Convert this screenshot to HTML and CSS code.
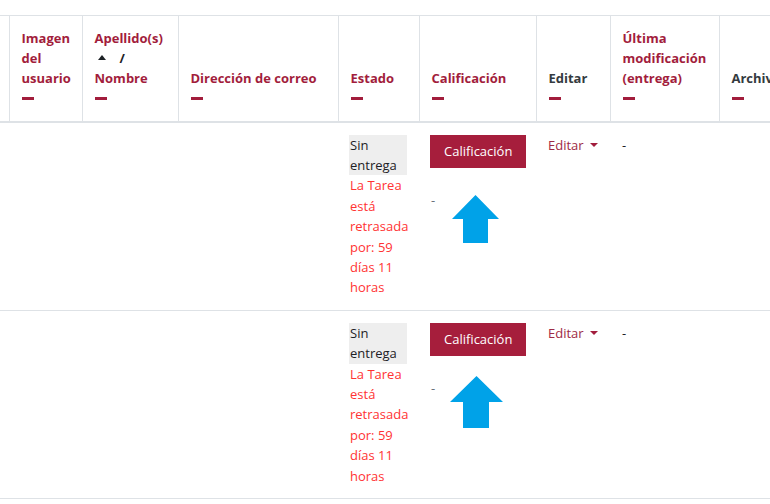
FILE: index.html
```html
<!DOCTYPE html>
<html lang="es">
<head>
    <meta charset="UTF-8">
    <meta name="viewport" content="width=device-width, initial-scale=1.0">
    <title>Calificaciones</title>
    <link rel="stylesheet" href="styles.css">
</head>
<body>

    <div class="table-wrap">
        <table class="grading">
            <colgroup>
                <col class="col-edge">
                <col class="col-picture">
                <col class="col-name">
                <col class="col-email">
                <col class="col-status">
                <col class="col-grade">
                <col class="col-edit">
                <col class="col-modified">
                <col class="col-files">
            </colgroup>
            <thead>
                <tr>
                    <th class="edge"></th>
                    <th><a href="#">Imagen del usuario</a><span class="hide-icon"></span></th>
                    <th>
                        <a href="#">Apellido(s)</a>
                        <div class="sort-line">
                            <svg class="sort-asc" width="8" height="5" viewBox="0 0 8 5"><polygon points="4,0 8,5 0,5" fill="#1d2125"/></svg>
                            <span class="sep">/</span>
                        </div>
                        <a href="#">Nombre</a><span class="hide-icon"></span>
                    </th>
                    <th><a href="#">Dirección de correo</a><span class="hide-icon"></span></th>
                    <th><a href="#">Estado</a><span class="hide-icon"></span></th>
                    <th><a href="#">Calificación</a><span class="hide-icon"></span></th>
                    <th class="plain">Editar<span class="hide-icon"></span></th>
                    <th><a href="#">Última modificación (entrega)</a><span class="hide-icon"></span></th>
                    <th class="plain"><span class="nowrap">Archivos enviados</span><span class="hide-icon"></span></th>
                </tr>
            </thead>
            <tbody>
                <tr>
                    <td class="edge"></td>
                    <td></td>
                    <td></td>
                    <td></td>
                    <td>
                        <div class="status-none">Sin entrega</div>
                        <div class="overdue">La Tarea está retrasada por: 59 días 11 horas</div>
                    </td>
                    <td class="grade-cell">
                        <button class="btn-grade">Calificación</button>
                        <div class="muted">-</div>
                        <svg class="pointer pointer-one" width="47" height="48" viewBox="0 0 47 48"><polygon points="23.5,0 47,24 36,24 36,48 11,48 11,24 0,24" fill="#00a2e8"/></svg>
                    </td>
                    <td><a class="menu-link" href="#">Editar <span class="caret"></span></a></td>
                    <td>-</td>
                    <td></td>
                </tr>
                <tr>
                    <td class="edge"></td>
                    <td></td>
                    <td></td>
                    <td></td>
                    <td>
                        <div class="status-none">Sin entrega</div>
                        <div class="overdue">La Tarea está retrasada por: 59 días 11 horas</div>
                    </td>
                    <td class="grade-cell">
                        <button class="btn-grade">Calificación</button>
                        <div class="muted">-</div>
                        <svg class="pointer pointer-two" width="53" height="52" viewBox="0 0 53 52"><polygon points="26.5,0 53,26 39,26 39,52 13,52 13,26 0,26" fill="#00a2e8"/></svg>
                    </td>
                    <td><a class="menu-link" href="#">Editar <span class="caret"></span></a></td>
                    <td>-</td>
                    <td></td>
                </tr>
            </tbody>
        </table>
    </div>

</body>
</html>
```

FILE: styles.css
```css
html, body {
    overflow: hidden;
}
body {
    font-family: "Open Sans", "Noto Sans", sans-serif;
    font-size: 13px;
    line-height: 20.4px;
    margin: 0;
    padding: 0;
    background-color: #ffffff;
    color: #1d2125;
}
.table-wrap {
    padding-top: 15px;
}
.grading {
    border-collapse: collapse;
    table-layout: fixed;
    width: 869px;
    border-top: 1px solid #dee2e6;
}
.col-edge { width: 9px; }
.col-picture { width: 73px; }
.col-name { width: 96px; }
.col-email { width: 160px; }
.col-status { width: 81px; }
.col-grade { width: 117px; }
.col-edit { width: 74px; }
.col-modified { width: 109px; }
.col-files { width: 150px; }

.grading th,
.grading td {
    padding: 12px;
    text-align: left;
}
.grading th.edge,
.grading td.edge {
    padding: 0;
}
.grading th {
    vertical-align: bottom;
    font-weight: bold;
    line-height: 20.2px;
    border-right: 1px solid #dee2e6;
    border-bottom: 2px solid #dee2e6;
    color: #343a40;
}
.grading th a {
    color: #a21d3c;
    text-decoration: none;
}
.grading td {
    vertical-align: top;
    border-bottom: 1px solid #dee2e6;
}
.hide-icon {
    display: flex;
    align-items: center;
    height: 20px;
}
.hide-icon::before {
    content: "";
    display: block;
    width: 12px;
    height: 3px;
    background-color: #a21d3c;
}
.sort-line {
    display: flex;
    align-items: center;
    height: 20px;
}
.sort-asc {
    margin-left: 3px;
    margin-top: -2px;
}
.sep {
    margin-left: 14px;
    color: #1d2125;
}
.nowrap {
    white-space: nowrap;
}
.status-none {
    background-color: #eeeeee;
    margin-left: -1px;
    padding-left: 1px;
}
.overdue {
    color: #ff3333;
}
.grade-cell {
    position: relative;
}
.btn-grade {
    font-family: inherit;
    font-size: 13px;
    line-height: 21px;
    color: #ffffff;
    background-color: #a61e3c;
    border: none;
    padding: 6px 14px;
    margin-left: -1px;
    cursor: pointer;
}
.muted {
    color: #6a737b;
    margin-top: 22px;
}
.pointer {
    position: absolute;
}
.pointer-one {
    left: 33px;
    top: 72px;
}
.pointer-two {
    left: 31px;
    top: 65px;
}
.menu-link {
    color: #9e2b45;
    text-decoration: none;
    white-space: nowrap;
}
.caret {
    display: inline-block;
    width: 0;
    height: 0;
    margin-left: 3px;
    vertical-align: 3px;
    border-left: 4px solid transparent;
    border-right: 4px solid transparent;
    border-top: 4px solid #a21d3c;
}
```
